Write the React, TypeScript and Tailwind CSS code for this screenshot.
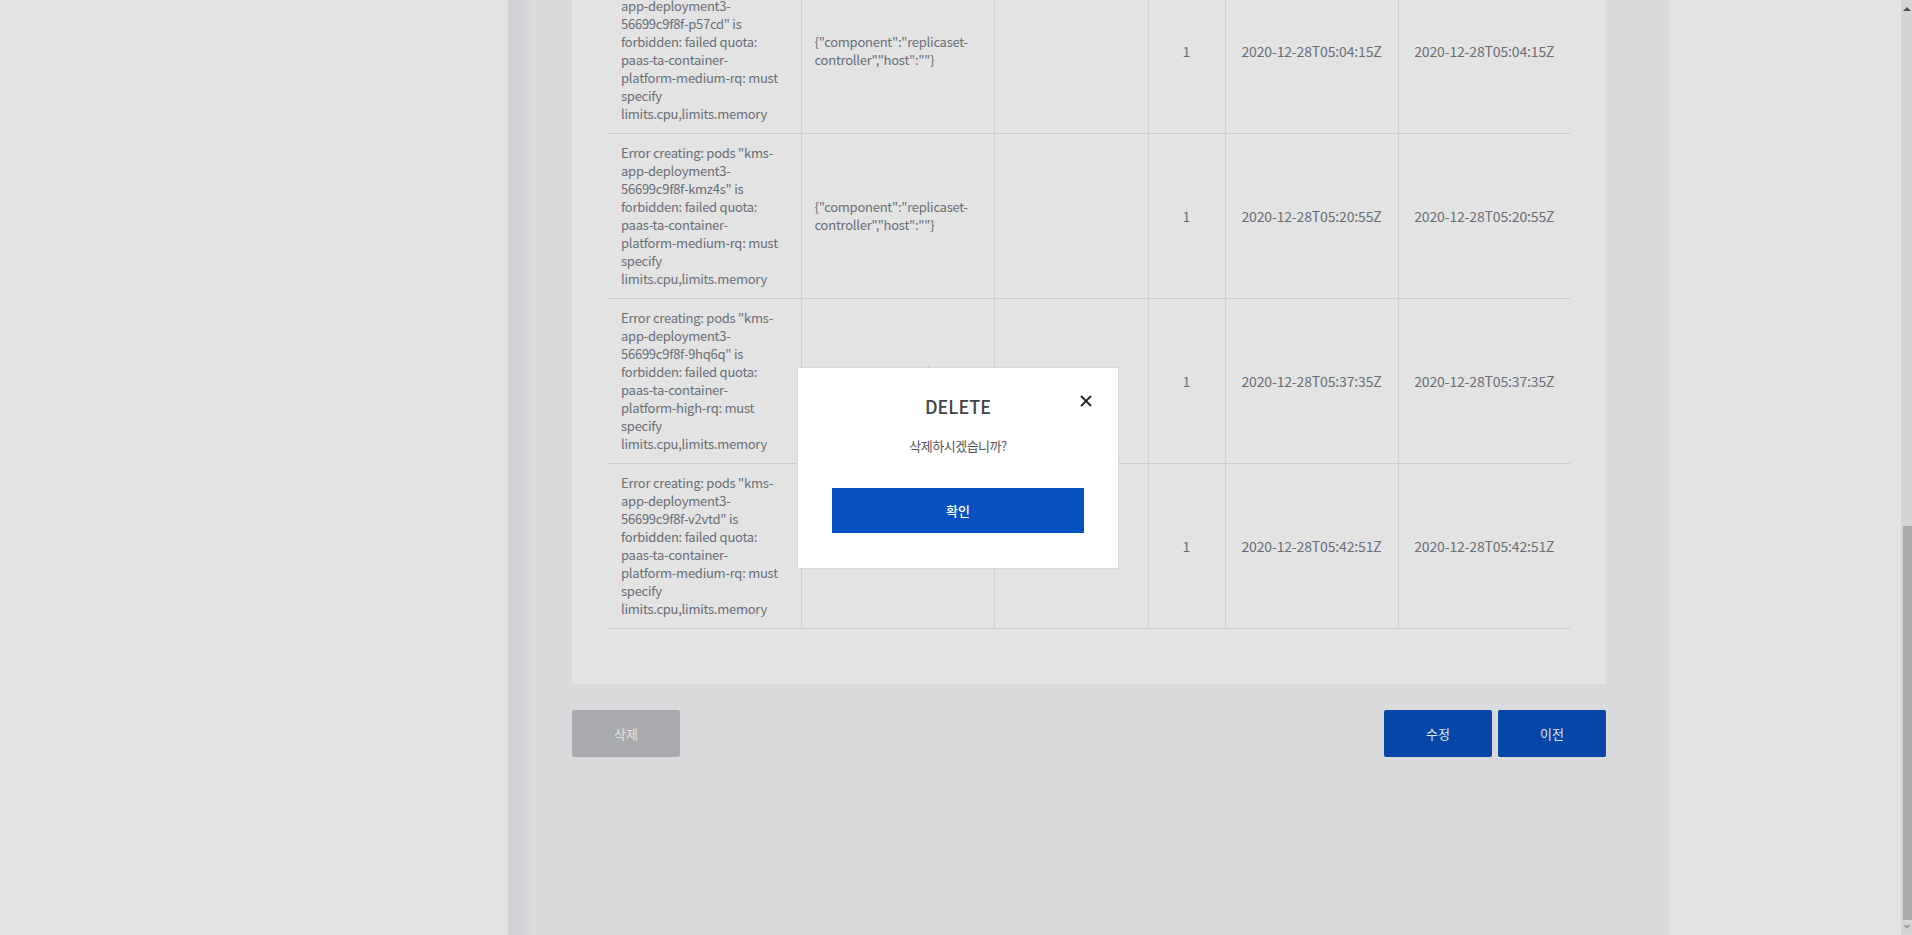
const rows = [
  { pod: 'p57cd', quota: 'medium', time: '2020-12-28T05:04:15Z' },
  { pod: 'kmz4s', quota: 'medium', time: '2020-12-28T05:20:55Z' },
  { pod: '9hq6q', quota: 'high', time: '2020-12-28T05:37:35Z' },
  { pod: 'v2vtd', quota: 'medium', time: '2020-12-28T05:42:51Z' },
]

function Scrollbar() {
  return (
    <div className="w-[11px] h-full bg-[#d4d4d4] flex flex-col items-end relative">
      <div className="absolute top-[7px] left-[2px] w-0 h-0 border-l-[4px] border-r-[4px] border-b-[4px] border-l-transparent border-r-transparent border-b-[#505050]" />
      <div className="mt-[526px] w-[9px] h-[394px] bg-[#ababab]" />
      <div className="absolute bottom-[6px] left-[2px] w-0 h-0 border-l-[4px] border-r-[4px] border-t-[4px] border-l-transparent border-r-transparent border-t-[#a3a3a3]" />
    </div>
  )
}

export default function App() {
  return (
    <div className="relative w-[1912px] h-[935px] overflow-hidden flex font-['Noto_Sans_CJK_KR',sans-serif]">
      {/* sidebar */}
      <div className="w-[508px] shrink-0 bg-white" />

      {/* main */}
      <div className="w-[1162px] shrink-0 h-full bg-[linear-gradient(to_right,#e8e9ec,#f4f5f8_26px)] px-16">
        <div className="bg-white px-[36px] pb-[55px]">
          <table className="w-full table-fixed border-collapse -mt-[31px] leading-[18px] text-[#777c86]">
            <colgroup>
              <col className="w-[193px]" />
              <col className="w-[193px]" />
              <col className="w-[154px]" />
              <col className="w-[77px]" />
              <col className="w-[173px]" />
              <col />
            </colgroup>
            <tbody>
              {rows.map((r) => (
                <tr key={r.pod} className="border-b border-[#e6e6e6]">
                  <td className="pl-[13px] pr-[19px] py-[10px] align-middle text-[13px] tracking-[-0.25px]">
                    Error creating: pods "kms-app-deployment3-56699c9f8f-{r.pod}" is forbidden: failed quota: paas-ta-container-platform-{r.quota}-rq: must specify limits.cpu,limits.memory
                  </td>
                  <td className="px-[13px] py-[10px] align-middle border-l border-[#e9e9e9] text-[13px] tracking-[-0.25px]">
                    {'{"component":"replicaset-controller","host":""}'}
                  </td>
                  <td className="px-[13px] py-[10px] align-middle border-l border-[#e9e9e9]" />
                  <td className="px-2 py-[10px] align-middle text-center border-l border-[#e9e9e9] text-[14px]">1</td>
                  <td className="px-2 py-[10px] align-middle text-center border-l border-[#e9e9e9] text-[14px] tracking-[-0.15px]">{r.time}</td>
                  <td className="px-2 py-[10px] align-middle text-center border-l border-[#e9e9e9] text-[14px] tracking-[-0.15px]">{r.time}</td>
                </tr>
              ))}
            </tbody>
          </table>
        </div>

        <div className="mt-[26px] flex items-center justify-between">
          <button className="w-[108px] h-[47px] rounded-[2px] bg-[#bebfc3] text-white text-[13px]">삭제</button>
          <div className="flex gap-[6px]">
            <button className="w-[108px] h-[47px] rounded-[2px] bg-[#0650bd] text-white text-[13px]">수정</button>
            <button className="w-[108px] h-[47px] rounded-[2px] bg-[#0650bd] text-white text-[13px]">이전</button>
          </div>
        </div>
      </div>

      {/* right area */}
      <div className="w-[231px] shrink-0 bg-white" />

      <Scrollbar />

      {/* dim overlay */}
      <div className="absolute top-0 left-0 bottom-0 right-[11px] bg-black/[0.11]" />

      {/* modal */}
      <div className="absolute left-[797px] top-[367px] w-[322px] h-[202px] bg-white border border-[#d9d9d9] px-[34px] pt-[25px] flex flex-col items-center">
        <button className="absolute right-[25px] top-[26px] w-[13px] h-[13px]">
          <svg viewBox="0 0 12 12" className="w-[12px] h-[12px]" fill="none" stroke="#222" strokeWidth="1.8">
            <path d="M1 1L11 11M11 1L1 11" />
          </svg>
        </button>
        <div className="text-[18px] leading-[26px] font-medium text-[#444]">DELETE</div>
        <div className="mt-[17px] text-[13px] leading-[20px] text-[#555] tracking-[-0.5px]">삭제하시겠습니까?</div>
        <button className="mt-[32px] w-full h-[45px] bg-[#0750bf] text-white text-[13px] font-medium">확인</button>
      </div>
    </div>
  )
}
